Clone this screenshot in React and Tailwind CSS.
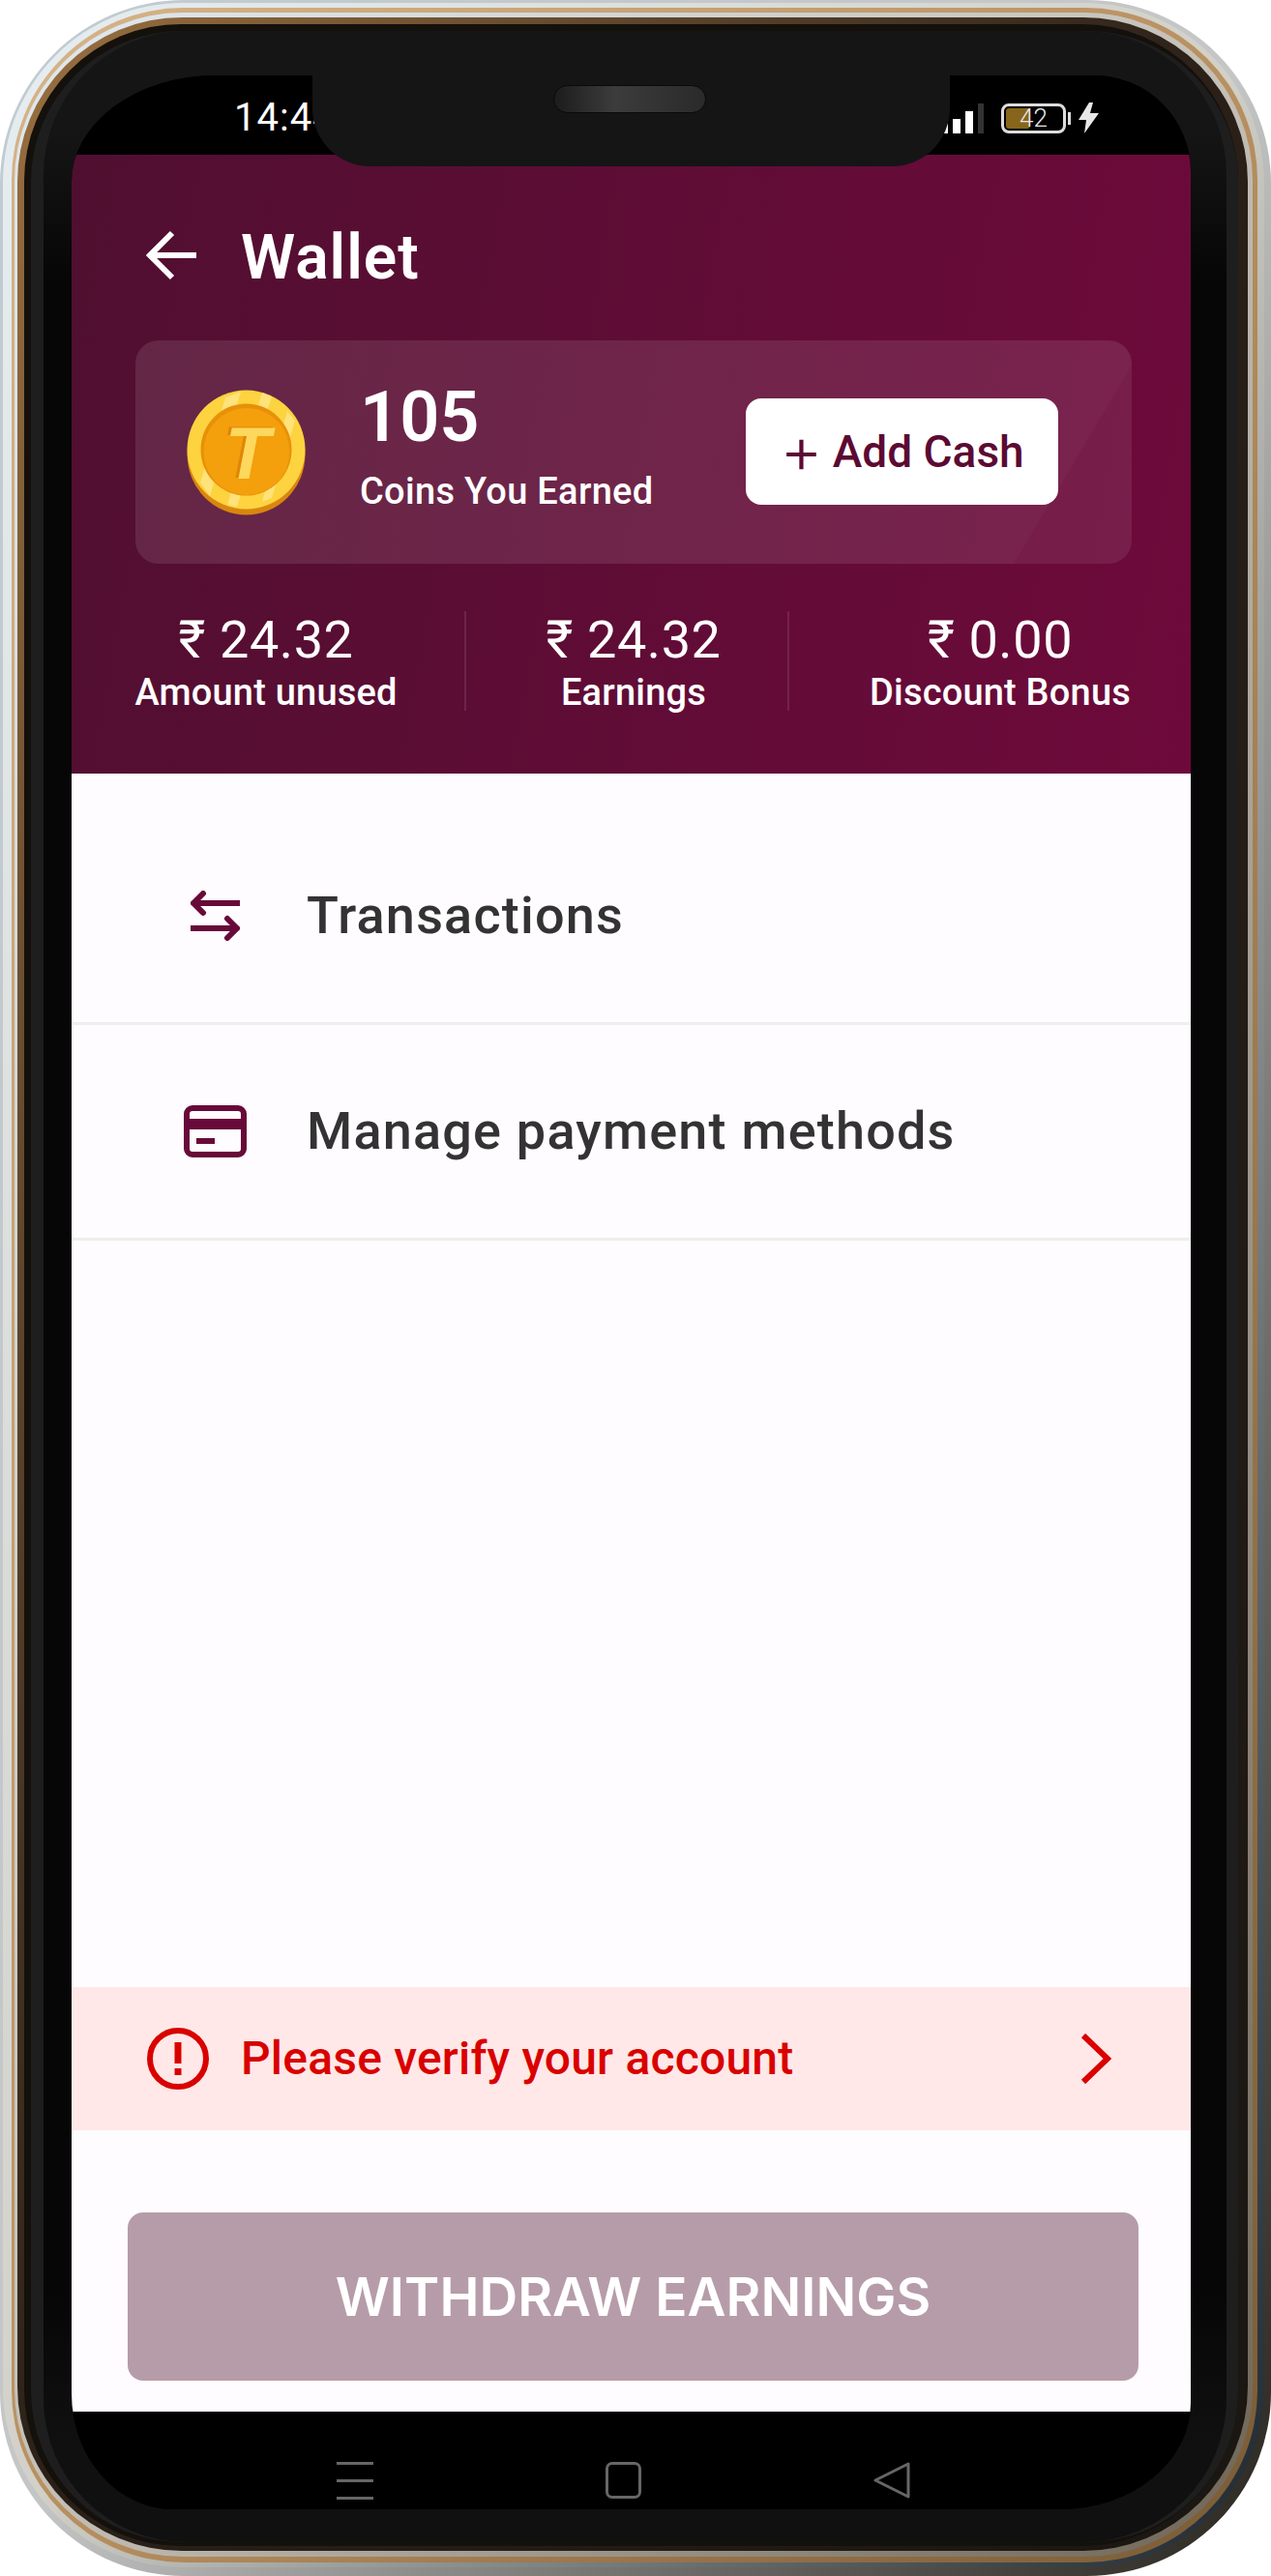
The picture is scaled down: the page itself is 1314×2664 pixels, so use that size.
import React from 'react';

const Coin = () => (
  <svg width="123" height="130" viewBox="0 0 123 130" className="shrink-0">
    <ellipse cx="61.5" cy="67" rx="61" ry="62.5" fill="#d9860f" />
    <ellipse cx="61.5" cy="62" rx="61" ry="61.5" fill="#fdd33f" />
    <path d="M14 96 L40 8 L56 2 L24 110 Z M78 3 L88 7 L52 121 L42 119 Z M104 22 L112 32 L88 112 L78 116 Z" fill="#fee27a" />
    <ellipse cx="61.5" cy="62" rx="47" ry="47.5" fill="#e8900a" />
    <ellipse cx="62" cy="64" rx="44.5" ry="45" fill="#f49f0c" />
    <text x="60" y="91" textAnchor="middle" fontFamily="'Liberation Sans', sans-serif" fontWeight="700" fontStyle="italic" fontSize="76" fill="#e0860a">T</text>
    <text x="63" y="92" textAnchor="middle" fontFamily="'Liberation Sans', sans-serif" fontWeight="700" fontStyle="italic" fontSize="76" fill="#fdd85c">T</text>
  </svg>
);

const BackArrow = () => (
  <svg width="52" height="52" viewBox="0 0 52 52" fill="none" stroke="#fff" strokeWidth="6" className="shrink-0">
    <path d="M52 26 H5 M27 3 L4 26 L27 49" />
  </svg>
);

const TransferIcon = () => (
  <svg width="51" height="52" viewBox="0 0 51 52" fill="none" stroke="#680a39" strokeWidth="6" strokeLinecap="round" strokeLinejoin="round">
    <path d="M51 13 H3 M13 3 L3 13 L13 23" />
    <path d="M0 39 H48 M38 29 L48 39 L38 49" />
  </svg>
);

const CardIcon = () => (
  <svg width="65" height="54" viewBox="0 0 65 54" fill="none">
    <rect x="3" y="3" width="59" height="48" rx="6" stroke="#680a39" strokeWidth="6" />
    <rect x="3" y="14" width="59" height="11" fill="#680a39" />
    <rect x="13" y="34" width="19" height="6" fill="#680a39" />
  </svg>
);

const AlertIcon = () => (
  <svg width="64" height="64" viewBox="0 0 64 64" fill="none" className="shrink-0">
    <circle cx="32" cy="32" r="29" stroke="#d90000" strokeWidth="6" />
    <rect x="28.5" y="15" width="7" height="22" fill="#d90000" />
    <rect x="28.5" y="42" width="7" height="7" fill="#d90000" />
  </svg>
);

const Chevron = () => (
  <svg width="32" height="52" viewBox="0 0 32 52" fill="none" stroke="#d90000" strokeWidth="6" className="shrink-0">
    <path d="M3 2 L28 26 L3 50" />
  </svg>
);

const StatusBar = () => (
  <div className="h-[82px] shrink-0 flex items-center justify-between pl-[168px] pr-[95px] pt-[6px] bg-black">
    <span className="text-[40px] leading-none text-white tracking-[1px]">14:44</span>
    <div className="flex items-end h-[31px]">
      <div className="flex items-end gap-[5px] mr-[18px]">
        <div className="w-[8px] h-[10px] bg-white" />
        <div className="w-[8px] h-[15px] bg-white" />
        <div className="w-[8px] h-[23px] bg-white" />
        <div className="w-[6px] h-[31px] bg-[#333333]" />
      </div>
      <div className="relative w-[67px] h-[31px] rounded-[8px] border-[3px] border-[#dddddd] overflow-hidden flex items-center justify-center">
        <div className="absolute left-[2px] top-[2px] bottom-[2px] w-[25px] rounded-[3px] bg-[#87651a]" />
        <span className="relative text-[26px] leading-none text-[#e8e8e8] font-light">42</span>
      </div>
      <div className="w-[3px] h-[13px] bg-[#dddddd] ml-[2px] mb-[9px] mr-[8px]" />
      <svg width="21" height="32" viewBox="0 0 21 32" fill="#e8e8e8">
        <polygon points="11,0 0,18 8,18 6,32 21,11 12,11 15,0" />
      </svg>
    </div>
  </div>
);

const Header = () => (
  <div className="h-[640px] shrink-0 bg-[linear-gradient(100deg,#500f30,#6e0a3b)] text-white overflow-hidden">
    <div className="flex items-center h-[80px] mt-[64px] pl-[77px]">
      <BackArrow />
      <span className="ml-[46px] mt-[5px] text-[64px] leading-none font-semibold tracking-[1px]">Wallet</span>
    </div>
    <div className="relative mt-[48px] ml-[66px] w-[1030px] h-[231px] rounded-[24px] bg-white/10 flex items-center pl-[53px] overflow-hidden">
      <svg className="absolute right-0 bottom-0" width="122" height="205" viewBox="0 0 122 205">
        <polygon points="122,0 122,205 0,205" fill="#6d0a3b" opacity="0.2" />
      </svg>
      <Coin />
      <div className="ml-[56px] -mt-[10px] flex flex-col">
        <span className="text-[72px] leading-[72px] font-semibold">105</span>
        <span className="mt-[18px] text-[38px] leading-[44px] font-medium tracking-[0.3px]">Coins You Earned</span>
      </div>
      <div className="absolute left-[631px] top-[60px] w-[323px] h-[110px] rounded-[16px] bg-white flex items-center justify-center text-[#5c0a33] text-[46px] leading-none font-medium">
        <span className="font-light text-[68px] leading-none mr-[10px] -mt-[6px]" style={{ fontFamily: 'Inter, sans-serif' }}>+</span>
        Add Cash
      </div>
    </div>
    <div className="flex mt-[49px] pl-[66px] h-[103px]">
      <div className="w-[270px] mr-[70px] flex flex-col items-center">
        <span className="text-[54px] leading-[60px] tracking-[0.6px]">₹ 24.32</span>
        <span className="mt-[2px] text-[38px] leading-[44px] font-medium whitespace-nowrap tracking-[0.2px]">Amount unused</span>
      </div>
      <div className="w-[2px] bg-white/10" />
      <div className="w-[332px] pl-[14px] flex flex-col items-center">
        <span className="text-[54px] leading-[60px] tracking-[0.6px]">₹ 24.32</span>
        <span className="mt-[2px] text-[38px] leading-[44px] font-medium tracking-[0.2px]">Earnings</span>
      </div>
      <div className="w-[2px] bg-white/10" />
      <div className="w-[270px] ml-[83px] flex flex-col items-center">
        <span className="text-[54px] leading-[60px] tracking-[0.6px]">₹ 0.00</span>
        <span className="mt-[2px] text-[38px] leading-[44px] font-medium whitespace-nowrap tracking-[0.2px]">Discount Bonus</span>
      </div>
    </div>
  </div>
);

const Row = ({ icon, label }) => (
  <div className="h-[223px] border-b-[3px] border-[#eeeeec] flex items-center pl-[116px]">
    <div className="w-[65px] flex justify-center shrink-0">{icon}</div>
    <span className="ml-[62px] text-[54px] leading-none font-medium text-[#333333] tracking-[1.2px]">{label}</span>
  </div>
);

const NavBar = () => (
  <div className="h-[101px] shrink-0 bg-black relative">
    <div className="absolute left-[274px] top-[52px] w-[38px] flex flex-col gap-[15px]">
      <div className="h-[3px] bg-[#666666]" />
      <div className="h-[3px] bg-[#666666]" />
      <div className="h-[3px] bg-[#666666]" />
    </div>
    <div className="absolute left-[552px] top-[52px] w-[37px] h-[38px] rounded-[7px] border-[3px] border-[#666666]" />
    <svg className="absolute left-[829px] top-[51px]" width="38" height="40" viewBox="0 0 38 40" fill="none" stroke="#666666" strokeWidth="3" strokeLinejoin="round">
      <path d="M36 3 V37 L2 20 Z" />
    </svg>
  </div>
);

const Screen = () => (
  <div className="h-[2517px] bg-black overflow-hidden flex flex-col rounded-tl-[150px_110px] rounded-tr-[100px_100px] rounded-bl-[105px_120px] rounded-br-[135px_110px]">
    <StatusBar />
    <Header />
    <div className="flex-1 bg-[#fefcfe] flex flex-col">
      <div className="pt-[37px] flex-1">
        <Row icon={<TransferIcon />} label="Transactions" />
        <Row icon={<CardIcon />} label="Manage payment methods" />
      </div>
      <div className="h-[148px] shrink-0 bg-[#ffe8e7] flex items-center pl-[78px] pr-[82px]">
        <AlertIcon />
        <span className="ml-[33px] flex-1 text-[48px] leading-none font-medium text-[#d90000] tracking-[0.2px]">Please verify your account</span>
        <Chevron />
      </div>
      <div className="pt-[85px] pb-[32px] pl-[58px] pr-[54px] shrink-0">
        <div className="h-[174px] rounded-[16px] bg-[#b69ca9] flex items-center justify-center text-white text-[55px] leading-none font-[560]" style={{ fontFamily: 'Inter, sans-serif' }}>
          WITHDRAW EARNINGS
        </div>
      </div>
    </div>
    <NavBar />
  </div>
);

export default function App() {
  return (
    <div className="w-[1314px] h-[2664px] bg-white overflow-hidden" style={{ fontFamily: 'Roboto, "Noto Sans", sans-serif' }}>
      {/* chrome edge, one nested ring per band of the phone's frame */}
      <div className="h-full pt-[3px] pl-[3px] pr-[7px] pb-[9px] rounded-[190px] bg-gradient-to-br from-[#c0ccd2] via-[#c4c6c6] to-[#2a2620]">
        <div className="h-full pt-[5px] pl-[9px] pr-[7px] pb-[5px] rounded-[186px] bg-gradient-to-br from-[#e6eef2] via-[#d2d0c8] to-[#1e2830]">
          <div className="h-full pt-[5px] pl-[3px] pr-[5px] pb-[6px] rounded-[178px] bg-gradient-to-br from-[#d6b488] via-[#b89060] to-[#7a5c36]">
            <div className="h-full pt-[5px] pl-[3px] pr-[5px] pb-[6px] rounded-[174px] bg-gradient-to-br from-[#dfe9f0] via-[#c4c0b8] to-[#6f6657]">
              <div className="h-full pt-[7px] pl-[7px] pr-[10px] pb-[5px] rounded-[170px] bg-gradient-to-br from-[#9a7040] via-[#2a2018] to-[#1a1612]">
                <div className="h-full pt-[7px] pl-[7px] pb-[4px] rounded-[162px] bg-[#14100c]">
                  <div className="h-full pl-[13px] pr-[12px] rounded-[156px] bg-[#1e1e1e]">
                    <div className="relative h-full pt-[46px] pb-[34px] pl-[29px] pr-[37px] rounded-[148px] bg-[linear-gradient(180deg,#151515_4%,#060606_10%,#060606_90%,#101010_96%)]">
                      <Screen />
                      {/* notch sits over the status bar and the top of the header */}
                      <div className="absolute left-[278px] top-0 w-[659px] h-[140px] rounded-b-[60px] bg-[#151515]">
                        <div className="absolute left-[249px] top-[56px] w-[158px] h-[29px] rounded-full bg-[linear-gradient(90deg,#1c1c1c,#3c3c3c_40%,#2a2a2a)] border border-[#0a0a0a]" />
                      </div>
                    </div>
                  </div>
                </div>
              </div>
            </div>
          </div>
        </div>
      </div>
    </div>
  );
}
